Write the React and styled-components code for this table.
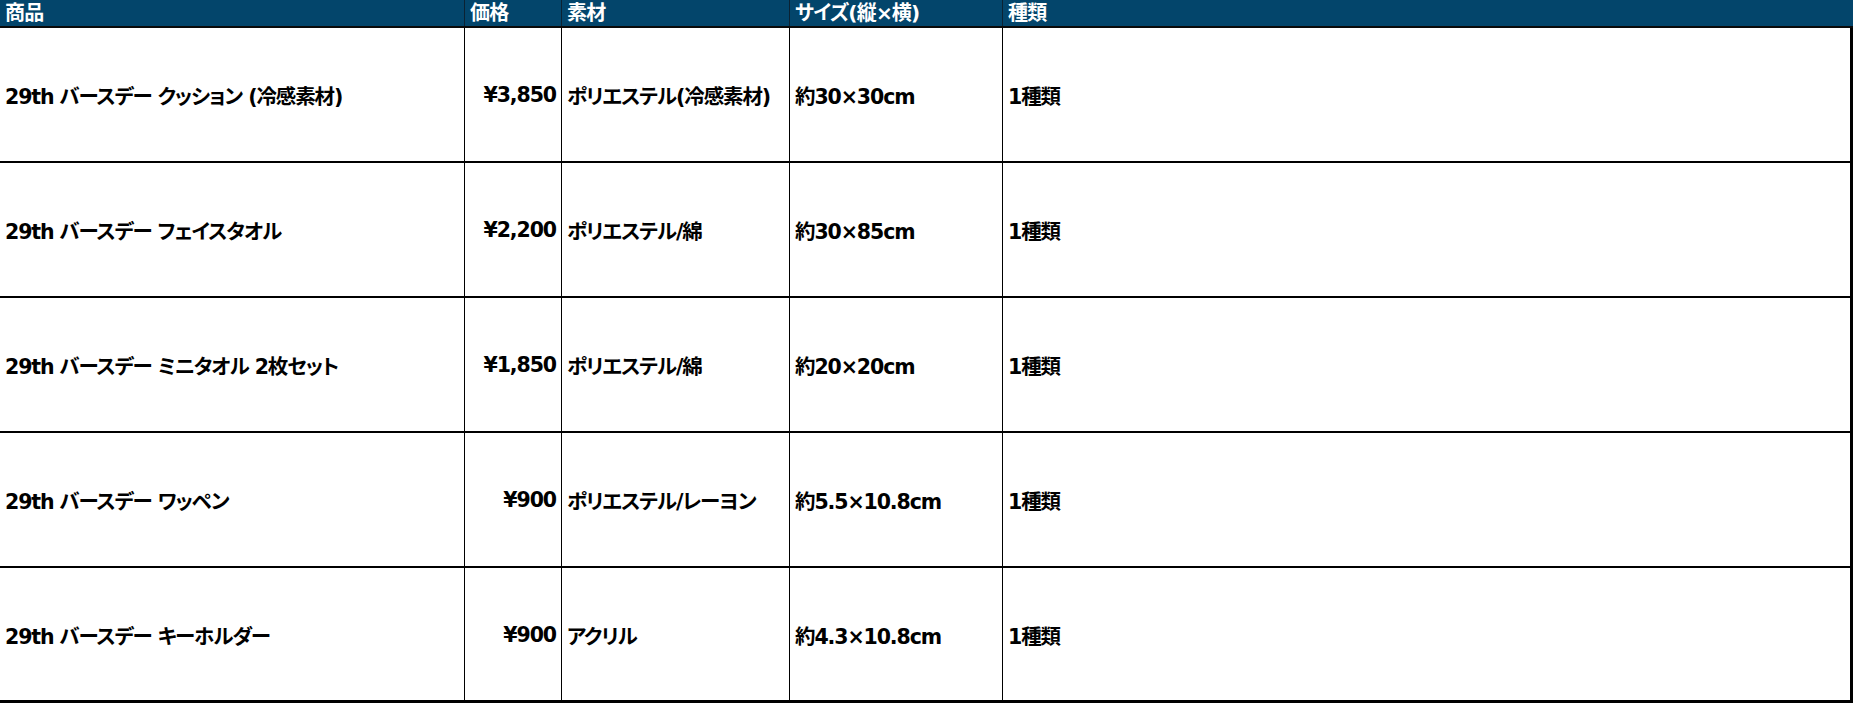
import React from 'react'
import styled, { createGlobalStyle } from 'styled-components'

const GlobalStyle = createGlobalStyle`
  html, body {
    margin: 0;
    padding: 0;
    background: #fff;
  }
  body {
    font-family: 'DejaVu Sans', 'Noto Sans CJK JP', sans-serif;
    font-feature-settings: 'palt';
  }
`

const columns = '465px 97px 228px 213px 1fr'

const Sheet = styled.div`
  width: 1853px;
  height: 703px;
  display: flex;
  flex-direction: column;
  overflow: hidden;
`

const HeaderRow = styled.div`
  display: grid;
  grid-template-columns: ${columns};
  height: 28px;
  box-sizing: border-box;
  background: #03456b;
  border-bottom: 2px solid #0a0a0a;
`

const HeaderCell = styled.div`
  color: #fff;
  font-weight: 700;
  font-size: 20px;
  letter-spacing: -0.8px;
  line-height: 26px;
  padding-left: 5px;
  box-sizing: border-box;
  white-space: nowrap;
  border-right: ${(p) => (p.$last ? 'none' : '1px solid #0b2233')};
`

const Body = styled.div`
  width: 1853px;
  box-sizing: border-box;
  border-right: 3px solid #000;
  display: flex;
  flex-direction: column;
`

const Row = styled.div`
  display: grid;
  grid-template-columns: ${columns};
  height: 135px;
  box-sizing: border-box;
  border-bottom: ${(p) => (p.$last ? '3px' : '2px')} solid #000;
`

const Cell = styled.div`
  display: flex;
  align-items: center;
  justify-content: ${(p) => (p.$right ? 'flex-end' : 'flex-start')};
  padding: ${(p) => (p.$right ? '1px 5px 0 0' : '1px 0 0 5px')};
  box-sizing: border-box;
  border-right: ${(p) => (p.$last ? 'none' : '1px solid #000')};
  color: #000;
  font-weight: 700;
  font-size: 20.5px;
  letter-spacing: -1.1px;
  white-space: nowrap;
  overflow: hidden;
`

const heads = ['商品', '価格', '素材', 'サイズ(縦×横)', '種類']

const items = [
  ['29th バースデー クッション (冷感素材)', '¥3,850', 'ポリエステル(冷感素材)', '約30×30cm', '1種類'],
  ['29th バースデー フェイスタオル', '¥2,200', 'ポリエステル/綿', '約30×85cm', '1種類'],
  ['29th バースデー ミニタオル 2枚セット', '¥1,850', 'ポリエステル/綿', '約20×20cm', '1種類'],
  ['29th バースデー ワッペン', '¥900', 'ポリエステル/レーヨン', '約5.5×10.8cm', '1種類'],
  ['29th バースデー キーホルダー', '¥900', 'アクリル', '約4.3×10.8cm', '1種類'],
]

export default function App() {
  return (
    <>
      <GlobalStyle />
      <Sheet>
        <HeaderRow>
          {heads.map((h, i) => (
            <HeaderCell key={h} $last={i === heads.length - 1}>
              {h}
            </HeaderCell>
          ))}
        </HeaderRow>
        <Body>
          {items.map((row, r) => (
            <Row key={r} $last={r === items.length - 1}>
              {row.map((v, i) => (
                <Cell key={i} $right={i === 1} $last={i === row.length - 1}>
                  {v}
                </Cell>
              ))}
            </Row>
          ))}
        </Body>
      </Sheet>
    </>
  )
}
